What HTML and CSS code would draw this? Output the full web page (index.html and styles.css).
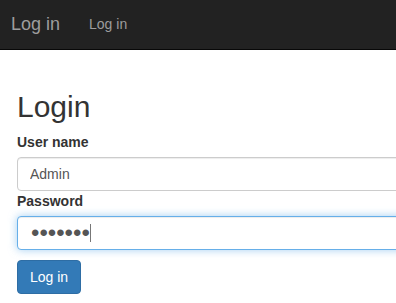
FILE: index.html
```html
<!DOCTYPE html>
<html lang="en">

<head>
    <meta charset="UTF-8">
    <meta name="viewport" content="width=device-width, initial-scale=1.0">
    <title>Log in</title>
    <link rel="stylesheet" href="styles.css">
</head>

<body>
    <div class="navbar">
        <a class="navbar-brand" href="#">Log in</a>
        <a class="nav-link" href="#">Log in</a>
    </div>

    <div class="container">
        <h2>Login</h2>
        <form class="login-form">
            <label for="username">User name</label>
            <input type="text" id="username" class="form-control" value="Admin">
            <label for="password">Password</label>
            <div class="input-wrap">
                <input type="password" id="password" class="form-control password focused" value="1234567">
                <span class="caret"></span>
            </div>
            <button type="submit" class="btn-primary">Log in</button>
        </form>
    </div>
</body>

</html>
```

FILE: styles.css
```css
body {
    font-family: "Liberation Sans", Arial, sans-serif;
    font-size: 14px;
    line-height: 20px;
    color: #333;
    background-color: #fff;
    margin: 0;
    overflow: hidden;
}

.navbar {
    height: 49px;
    background-color: #222;
    border-bottom: 1px solid #080808;
    display: flex;
    align-items: center;
}

.navbar a {
    color: #9d9d9d;
    text-decoration: none;
}

.navbar-brand {
    font-size: 18px;
    padding: 0 15px 0 11px;
    margin-top: -1px;
}

.nav-link {
    padding: 0 15px 0 14px;
    margin-top: -1px;
}

.container {
    padding: 20px 17px 0;
}

h2 {
    font-size: 30px;
    font-weight: 500;
    line-height: 33px;
    margin: 20px 0 9px;
}

.login-form {
    display: flex;
    flex-direction: column;
    align-items: flex-start;
}

.login-form label {
    font-weight: bold;
    margin-bottom: 5px;
}

.form-control {
    box-sizing: border-box;
    width: 420px;
    height: 34px;
    padding: 6px 12px;
    font-family: inherit;
    font-size: 14px;
    color: #555;
    border: 1px solid #ccc;
    border-radius: 4px;
    box-shadow: inset 0 1px 1px rgba(0, 0, 0, 0.075);
    outline: none;
}

.input-wrap {
    position: relative;
}

.form-control.password {
    font-size: 24px;
    line-height: 20px;
    padding: 0 13px;
}

.form-control.focused {
    border-color: #66afe9;
    box-shadow: inset 0 1px 1px rgba(0, 0, 0, 0.075), 0 0 8px rgba(102, 175, 233, 0.6);
}

.caret {
    position: absolute;
    left: 73px;
    top: 8px;
    width: 1px;
    height: 18px;
    background-color: #777;
}

.btn-primary {
    margin-top: 10px;
    height: 34px;
    padding: 6px 12px;
    font-family: inherit;
    font-size: 14px;
    color: #fff;
    background-color: #337ab7;
    border: 1px solid #2e6da4;
    border-radius: 4px;
    cursor: pointer;
}
```
